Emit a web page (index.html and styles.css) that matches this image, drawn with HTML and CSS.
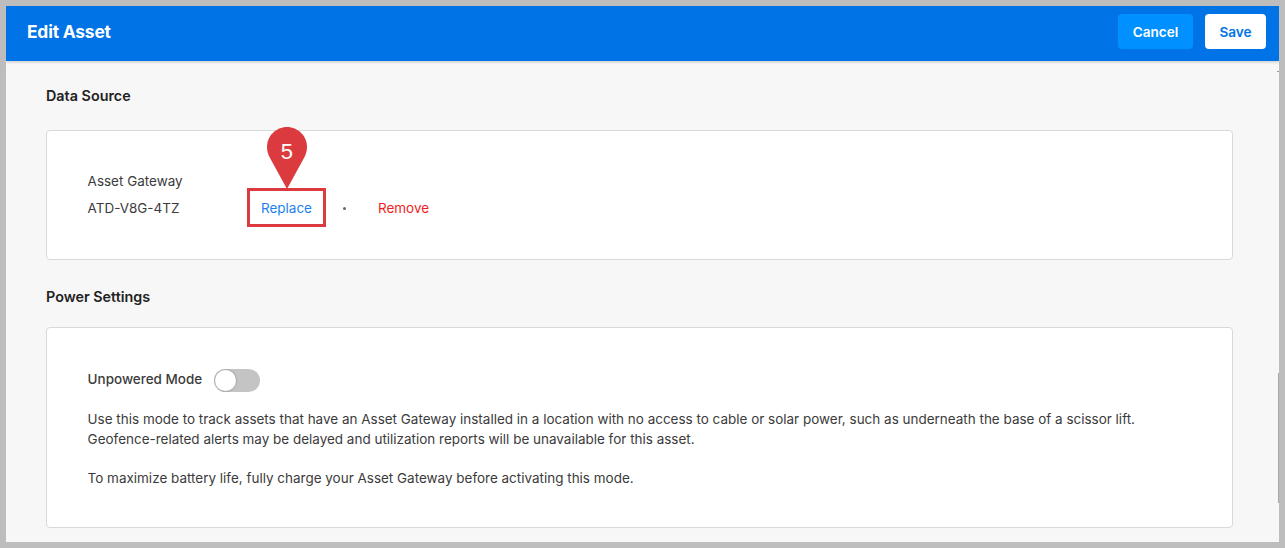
FILE: index.html
```html
<!DOCTYPE html>
<html lang="en">
<head>
<meta charset="utf-8">
<title>Edit Asset</title>
<link rel="stylesheet" href="styles.css">
</head>
<body>
<div class="frame">
  <div class="panel">
    <header class="topbar">
      <h1 class="title">Edit Asset</h1>
      <div class="actions">
        <button class="btn btn-cancel">Cancel</button>
        <button class="btn btn-save">Save</button>
      </div>
    </header>
    <main class="content">
      <h2 class="section-title">Data Source</h2>
      <section class="card card-source">
        <div class="source-label">Asset Gateway</div>
        <div class="source-row">
          <span class="source-id">ATD-V8G-4TZ</span>
          <span class="replace-box">
            <a class="link link-replace">Replace</a>
            <span class="pin">
              <svg class="pin-shape" width="40" height="62" viewBox="0 0 40 62"><path d="M20 0C9 0 0 9 0 20c0 4 1.200 7.600 3 11l17 31 17-31c1.800-3.400 3-7 3-11C40 9 31 0 20 0z" fill="#db3b3e"/></svg>
              <span class="pin-num">5</span>
            </span>
          </span>
          <span class="dot"></span>
          <a class="link link-remove">Remove</a>
        </div>
      </section>
      <h2 class="section-title section-power">Power Settings</h2>
      <section class="card card-power">
        <div class="toggle-row">
          <span class="toggle-label">Unpowered Mode</span>
          <span class="toggle"><span class="knob"></span></span>
        </div>
        <p class="desc">Use this mode to track assets that have an Asset Gateway installed in a location with no access to cable or solar power, such as underneath the base of a scissor lift.<br>Geofence-related alerts may be delayed and utilization reports will be unavailable for this asset.</p>
        <p class="desc desc-last">To maximize battery life, fully charge your Asset Gateway before activating this mode.</p>
      </section>
    </main>
    <span class="scroll-thumb"></span>
    <span class="scroll-tick"></span>
  </div>
</div>
</body>
</html>
```
FILE: styles.css
```css
* { box-sizing: border-box; }
html, body { margin: 0; padding: 0; height: 548px; overflow: hidden; }
body { font-family: Inter, "Liberation Sans", sans-serif; color: #3b3b3b; font-size: 13.48px; background: #bdbdbd; }
.frame { height: 548px; padding: 6px; background: #bdbdbd; }
.panel { position: relative; height: 536px; background: #f7f7f7; display: flex; flex-direction: column; overflow: hidden; }
.topbar { height: 55px; flex: none; background: #0073e6; display: flex; align-items: center; justify-content: space-between; padding: 0 13px 4px 21px; box-shadow: 0 1px 3px rgba(0,0,0,.2); }
.title { margin: 0; color: #fff; font-size: 17.4px; font-weight: 700; letter-spacing: -0.2px; }
.actions { display: flex; gap: 12px; }
.btn { height: 35px; border: 0; border-radius: 4px; font: 600 13.6px Inter, "Liberation Sans", sans-serif; padding: 0; }
.btn-cancel { width: 75px; background: #0090ff; color: #fff; }
.btn-save { width: 61px; background: #fff; color: #0073e6; }
.content { padding: 0 46px 0 40px; flex: 1; }
.section-title { margin: 0; padding-top: 27px; height: 69px; font-size: 14.35px; line-height: 16px; font-weight: 600; color: #222; }
.section-power { padding-top: 29px; height: 67px; }
.card { background: #fff; border: 1px solid #d9d9d9; border-radius: 4px; padding-left: 40.6px; }
.card-source { height: 130px; padding-top: 40px; }
.source-label { line-height: 20px; }
.source-row { display: flex; align-items: center; height: 38px; margin-top: -2px; }
.source-id { width: 159.4px; }
.replace-box { position: relative; width: 79px; height: 39px; margin-top: -2px; padding-top: 2px; border: 3px solid #db3b3e; display: flex; align-items: center; justify-content: center; }
.link-replace { color: #1a82f0; }
.link-remove { color: #f01e1e; }
.pin { position: absolute; left: 17px; top: -64px; width: 40px; height: 62px; }
.pin-shape { display: block; }
.pin-num { position: absolute; left: 0; right: 0; top: 12px; text-align: center; color: #fff; font-size: 22px; line-height: 26px; font-family: "Liberation Sans", sans-serif; }
.dot { width: 3px; height: 3px; border-radius: 50%; background: #666; margin: 0 32px 0 17px; }
.card-power { height: 201px; padding-top: 40px; }
.toggle-row { display: flex; align-items: center; height: 24px; gap: 11.6px; }
.toggle-label { font-weight: 500; padding-bottom: 2px; }
.toggle { width: 46px; height: 23px; border-radius: 12px; background: #c4c4c4; position: relative; display: block; }
.knob { position: absolute; left: 1px; top: 1px; width: 21px; height: 21px; border-radius: 50%; background: #fff; box-shadow: 0 0 1px 1px rgba(0,0,0,.12); }
.desc { margin: 17px 0 0; line-height: 20px; }
.desc-last { margin-top: 19px; }
.scroll-thumb { position: absolute; right: 0; top: 367px; width: 1px; height: 130px; background: #a9a9a9; }
.scroll-tick { position: absolute; right: 0; top: 65px; width: 2px; height: 1px; background: #999; }
```
